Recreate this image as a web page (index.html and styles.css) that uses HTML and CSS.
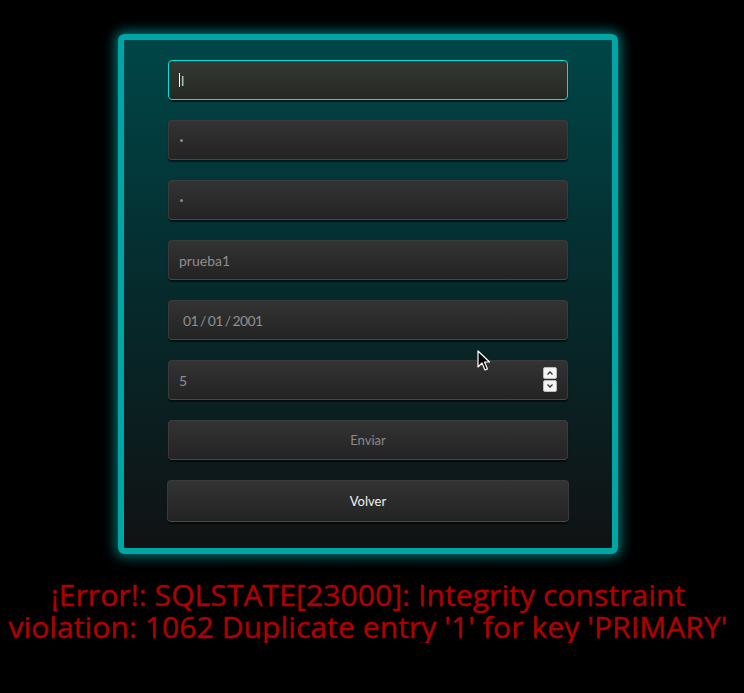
FILE: index.html
```
<!DOCTYPE html>
<html lang="es">
<head>
<meta charset="utf-8">
<link rel="stylesheet" href="styles.css">
</head>
<body>
<main class="page">
  <form class="card">
    <div class="field focused"><span class="caret"></span><span class="val">l</span></div>
    <div class="field"><span class="dot"></span></div>
    <div class="field"><span class="dot"></span></div>
    <div class="field"><span class="val">prueba1</span></div>
    <div class="field date"><span class="val">01 / 01 / 2001</span></div>
    <div class="field number"><span class="val">5</span>
      <span class="spin"><span class="up"><svg width="8" height="6" viewBox="0 0 8 6"><path d="M1.5 4.5 L4 2 L6.5 4.5" fill="none" stroke="#333" stroke-width="1.3"/></svg></span><span class="down"><svg width="8" height="6" viewBox="0 0 8 6"><path d="M1.5 1.5 L4 4 L6.5 1.5" fill="none" stroke="#333" stroke-width="1.3"/></svg></span></span>
    </div>
    <button type="button" class="btn send">Enviar</button>
    <button type="button" class="btn back">Volver</button>
  </form>
  <p class="error">¡Error!: SQLSTATE[23000]: Integrity constraint violation: 1062 Duplicate entry '1' for key 'PRIMARY'</p>
  <svg class="cursor" width="14" height="22" viewBox="0 0 14 22"><path d="M1 1 L1 17 L5 13 L8 20 L10.5 19 L7.5 12 L12.5 12 Z" fill="#000" stroke="#fff" stroke-width="1.2" stroke-linejoin="round"/></svg>
</main>
</body>
</html>
```
FILE: styles.css
```
html, body {
  background: #000;
}
body {
  margin: 8px 16px 8px 8px;
  font-family: Lato, "Open Sans", sans-serif;
}
.page {
  position: relative;
  display: flex;
  flex-direction: column;
  align-items: center;
}
.card {
  margin-top: 26px;
  width: 488px;
  box-sizing: content-box;
  border: 6px solid #00a6a6;
  border-radius: 6px;
  background: linear-gradient(to bottom, #004648 0%, #062a2c 50%, #101213 100%);
  box-shadow: 0 0 12px 3px rgba(0, 200, 200, 0.55);
  padding: 20px 0 26px;
  display: flex;
  flex-direction: column;
  align-items: center;
  gap: 20px;
}
.field {
  position: relative;
  width: 400px;
  height: 40px;
  box-sizing: border-box;
  border: 1px solid #3a3a3a;
  border-bottom-color: #474747;
  border-radius: 4px;
  background: linear-gradient(to bottom, #333333, #232323);
  box-shadow: 0 2px 1px rgba(0, 0, 0, 0.55);
  display: flex;
  align-items: center;
  padding: 0 10px;
  color: #8f8f8f;
  font-size: 14px;
}
.field.focused {
  border: 1px solid #00e0e0;
  background: linear-gradient(to bottom, #343833, #252823);
}
.caret {
  width: 1px;
  height: 14px;
  background: #fff;
  margin-right: 1px;
}
.focused .val {
  color: #cfcfcf;
}
.dot {
  width: 3px;
  height: 3px;
  border-radius: 50%;
  background: #8a8a8a;
  margin-left: 1px;
}
.date .val {
  margin-left: 4px;
  word-spacing: -1px;
  letter-spacing: -0.6px;
}
.spin {
  position: absolute;
  right: 10px;
  top: 6px;
  width: 14px;
  height: 25px;
  display: flex;
  flex-direction: column;
  gap: 1px;
}
.spin .up, .spin .down {
  flex: 1;
  background: #f4f4f4;
  border: 1px solid #bbb;
  border-radius: 2px;
  display: flex;
  align-items: center;
  justify-content: center;
}
.btn {
  width: 400px;
  height: 40px;
  border: 1px solid #3a3a3a;
  border-bottom-color: #474747;
  border-radius: 4px;
  background: linear-gradient(to bottom, #333333, #232323);
  box-shadow: 0 2px 1px rgba(0, 0, 0, 0.55);
  font-family: Lato, "Open Sans", sans-serif;
  font-size: 13px;
  color: #8a8a8a;
  padding: 0;
}
.btn.back {
  width: 402px;
  height: 42px;
  color: #f2f2f2;
}
.error {
  margin: 25px 0 0;
  width: 728px;
  text-align: center;
  color: #b00000;
  font-family: "Open Sans", sans-serif;
  font-size: 30px;
  line-height: 32px;
  letter-spacing: 0.1px;
  -webkit-text-stroke: 0.4px #b00000;
}
.cursor {
  position: absolute;
  left: 469px;
  top: 342px;
}
```
